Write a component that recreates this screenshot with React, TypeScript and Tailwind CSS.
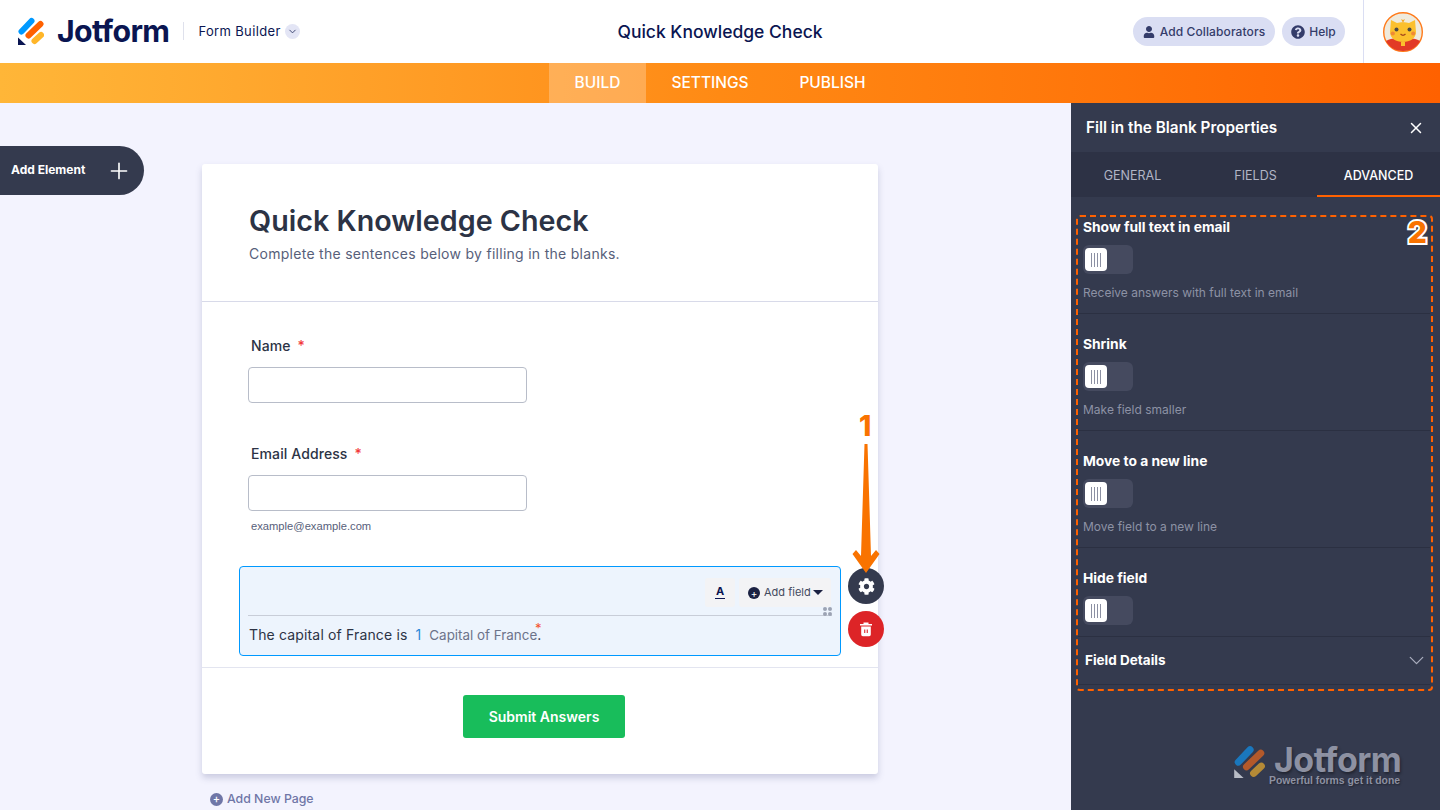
import React from "react";
import { ChevronDown, Plus, X } from "lucide-react";
import { FaCog, FaQuestionCircle, FaUser } from "react-icons/fa";

function LogoMark({ className = "", dim = false }: { className?: string; dim?: boolean }) {
  return (
    <svg viewBox="0 0 26 28" className={className}>
      <path d="M3.5 14.5 L13.5 4" stroke={dim ? "#1a77bd" : "#0099ff"} strokeWidth="6" strokeLinecap="round" />
      <path d="M10.5 18.5 L22.5 7" stroke={dim ? "#b3592a" : "#ff6100"} strokeWidth="6" strokeLinecap="round" />
      <path d="M16.5 24 L23 18" stroke={dim ? "#b58a36" : "#ffb629"} strokeWidth="6" strokeLinecap="round" />
      <path d="M0 20.5 V28 H8 Z" fill={dim ? "#b8bcc6" : "#0a1551"} />
    </svg>
  );
}

function Avatar() {
  return (
    <svg viewBox="0 0 40 40" className="h-10 w-10">
      <circle cx="20" cy="20" r="19.3" fill="#efeadc" stroke="#ff7a1a" strokeWidth="1.4" />
      <path d="M3 29 C8 26 14 26 20 26 C26 26 32 26 37 29 C34 35 28 39 20 39 C12 39 6 35 3 29 Z" fill="#e23a26" />
      <path d="M8 8 L14 11 C17 10 23 10 26 11 L32 8 L33 20 C33 26.5 27 30 20 30 C13 30 7 26.5 7 20 Z" fill="#fbc02d" />
      <path d="M18 7 L20 11 L22 7 L20 8 Z" fill="#f7a928" />
      <circle cx="13.5" cy="17.5" r="2" fill="#4d4a44" />
      <circle cx="26.5" cy="17.5" r="2" fill="#4d4a44" />
      <circle cx="9.8" cy="21.5" r="2.1" fill="#f08a34" />
      <circle cx="30.2" cy="21.5" r="2.1" fill="#f08a34" />
      <path d="M17.5 22 Q20 24.6 22.5 22" stroke="#a5481c" strokeWidth="1.2" fill="none" />
      <path d="M18 30 H22 V34 H18 Z" fill="#fbc02d" />
    </svg>
  );
}

function Toggle() {
  return (
    <div className="flex h-[29px] w-[50px] items-center rounded-[6px] bg-[#454a5f] pl-[2px]">
      <div className="flex h-[23px] w-[22px] items-center justify-center gap-[2px] rounded-[4px] bg-white">
        <span className="h-[14px] w-px bg-[#8c90a3]" />
        <span className="h-[14px] w-px bg-[#8c90a3]" />
        <span className="h-[14px] w-px bg-[#8c90a3]" />
        <span className="h-[14px] w-px bg-[#8c90a3]" />
      </div>
    </div>
  );
}

function PropertyRow({ title, hint, h }: { title: string; hint?: string; h: string }) {
  return (
    <div className={`${h} border-b border-[#2b3042] pl-[5px] pt-[1px]`}>
      <div className="text-[13.8px] font-bold leading-[16px] text-white">{title}</div>
      <div className="mt-[10px]">
        <Toggle />
      </div>
      {hint && <div className="mt-[11px] text-[12px] leading-[16px] text-[#8d92a5]">{hint}</div>}
    </div>
  );
}

function FieldLabel({ text }: { text: string }) {
  return (
    <div className="pl-[3px] text-[14px] font-medium leading-[18px] tracking-[0.1px] text-[#2c3345]">
      {text}
      <span className="ml-[7px] text-[#f23a3c]">*</span>
    </div>
  );
}

export default function App() {
  return (
    <div className="flex h-[810px] w-[1440px] flex-col overflow-hidden bg-[#f3f3fe] font-['Inter',sans-serif]">
      <header className="grid h-[63px] shrink-0 grid-cols-[1fr_auto_1fr] items-center bg-white">
        <div className="flex items-center pl-[18px]">
          <LogoMark className="h-[28px] w-[26px]" />
          <span className="ml-[13px] text-[30.3px] font-bold leading-none tracking-[-0.6px] text-[#0a1551]">Jotform</span>
          <span className="ml-[14px] h-[18px] w-px bg-[#dfe1ec]" />
          <span className="ml-[14px] text-[13px] leading-none tracking-[0.35px] text-[#0a1551]">Form Builder</span>
          <span className="ml-[4px] flex h-[15px] w-[15px] items-center justify-center rounded-full bg-[#e3e5f5]">
            <ChevronDown size={11} className="text-[#343c6a]" />
          </span>
        </div>
        <div className="text-[17.5px] font-medium leading-none text-[#0a1551]">Quick Knowledge Check</div>
        <div className="flex h-full items-center justify-end">
          <div className="flex h-[29px] w-[142px] items-center justify-center gap-[5px] rounded-full bg-[#dadef3] text-[12px] font-medium tracking-[0.1px] text-[#343c6a]">
            <FaUser size={12} />
            Add Collaborators
          </div>
          <div className="ml-[7px] flex h-[29px] w-[63px] items-center justify-center gap-[4px] rounded-full bg-[#dadef3] text-[12px] font-medium text-[#343c6a]">
            <FaQuestionCircle size={14} />
            Help
          </div>
          <div className="ml-[18px] flex h-full w-[77px] items-center justify-center border-l border-[#dadef3] pl-[1px]">
            <Avatar />
          </div>
        </div>
      </header>

      <nav className="flex h-[40px] shrink-0 justify-center bg-gradient-to-r from-[#ffb638] via-[#ff8a14] to-[#ff6100] text-[15.5px] font-medium text-white">
        <div className="flex w-[97px] items-center justify-center bg-white/25">BUILD</div>
        <div className="flex w-[128px] items-center justify-center">SETTINGS</div>
        <div className="flex w-[117px] items-center justify-center">PUBLISH</div>
      </nav>

      <div className="flex min-h-0 flex-1">
        <main className="relative w-[1071px] shrink-0">
          <div className="absolute left-0 top-[43px] flex h-[49px] w-[144px] items-center justify-between rounded-r-full bg-[#343a4e] pb-[2px] pl-[11px] pr-[12px] text-[12px] font-bold text-white">
            Add Element
            <Plus size={26} strokeWidth={1.5} className="mt-[2px]" />
          </div>

          <div className="ml-[202px] mt-[61px] w-[676px] rounded-[3px] bg-white shadow-[0_4px_6px_rgba(87,90,140,0.25)]">
            <section className="h-[138px] border-b border-[#d8dae9] pl-[47px] pt-[39px]">
              <h1 className="text-[28.7px] font-semibold leading-[36px] text-[#2c3345]">Quick Knowledge Check</h1>
              <p className="mt-[6px] text-[14px] leading-[18px] tracking-[0.28px] text-[#57607a]">
                Complete the sentences below by filling in the blanks.
              </p>
            </section>

            <section className="relative h-[366px] border-b border-[#e3e5f0] pt-[35px]">
              <div className="pl-[46px]">
                <FieldLabel text="Name" />
                <div className="mt-[12px] h-[36px] w-[279px] rounded-[4px] border border-[#b8bdc9] bg-white" />
              </div>
              <div className="mt-[42px] pl-[46px]">
                <FieldLabel text="Email Address" />
                <div className="mt-[12px] h-[36px] w-[279px] rounded-[4px] border border-[#b8bdc9] bg-white" />
                <div className="mt-[8px] pl-[3px] font-['Liberation_Sans',sans-serif] text-[11.2px] leading-[14px] text-[#57607a]">
                  example@example.com
                </div>
              </div>

              <div className="relative ml-[37px] mt-[33px] h-[90px] w-[602px] rounded-[4px] border border-[#0099ff] bg-[#edf4fd]">
                <div className="mx-[8px] flex h-[49px] items-start justify-end gap-[4px] border-b border-[#c8cdd8] pr-[1px] pt-[11px]">
                  <div className="flex h-[29px] w-[30px] flex-col items-center justify-center rounded-[3px] bg-[#f3f3f5] text-[#0a1551]">
                    <span className="text-[11px] font-bold leading-[11px]">A</span>
                    <span className="mt-[1px] h-[1.5px] w-[10px] bg-[#0a1551]" />
                  </div>
                  <div className="flex h-[29px] w-[92px] items-center rounded-[3px] bg-[#f3f3f5] pb-[1px] pl-[9px] text-[11px] text-[#434a60]">
                    <span className="mr-[4px] mt-[1px] flex h-[12px] w-[12px] items-center justify-center rounded-full bg-[#1b2142] text-[10px] leading-none text-white">+</span>
                    Add field
                    <span className="ml-[2px] h-0 w-0 border-x-[5px] border-t-[5px] border-x-transparent border-t-[#1b2142]" />
                  </div>
                </div>
                <div className="absolute right-[8px] top-[40px] grid grid-cols-2 gap-[1px]">
                  <span className="h-[4px] w-[4px] rounded-full bg-[#9ca3b4]" />
                  <span className="h-[4px] w-[4px] rounded-full bg-[#9ca3b4]" />
                  <span className="h-[4px] w-[4px] rounded-full bg-[#9ca3b4]" />
                  <span className="h-[4px] w-[4px] rounded-full bg-[#9ca3b4]" />
                </div>
                <div className="relative mt-[10px] pl-[9px] text-[14px] leading-[18px] tracking-[0.15px] text-[#2c3345]">
                  The capital of France is<span className="ml-[8px] text-[#2a8ad8]">1</span>
                  <span className="ml-[8px] text-[13.4px] tracking-normal text-[#6c738a]">Capital of France</span>.
                  <span className="absolute left-[295px] top-[-7px] text-[13px] text-[#f4522d]">*</span>
                </div>

                <div className="absolute left-[608px] top-[1px] flex h-[36px] w-[36px] items-center justify-center rounded-full bg-[#343a4e] text-white">
                  <FaCog size={17} />
                </div>
                <div className="absolute left-[608px] top-[44px] flex h-[36px] w-[36px] items-center justify-center rounded-full bg-[#dd2427]">
                  <svg viewBox="0 0 16 16" className="h-[16px] w-[16px]">
                    <path d="M2 3h12v1.6H2zM5.5 1.5h5V3h-5z" fill="#fff" />
                    <path fillRule="evenodd" d="M3.2 5.4h9.6v8.2a1.6 1.6 0 0 1-1.6 1.6H4.8a1.6 1.6 0 0 1-1.6-1.6zM6.2 8.5v3.4h1.1V8.5zM8.7 8.5v3.4h1.1V8.5z" fill="#fff" />
                  </svg>
                </div>
              </div>

              <svg viewBox="0 0 40 132" className="absolute left-[644px] top-[141px] h-[132px] w-[40px]">
                <path d="M18.5 1 H21.5 L25 113 L30 107 L33.5 111 L20 130 L6.5 111 L10 107 L15 113 Z" fill="#f97300" />
              </svg>
              <div className="absolute left-[657px] top-[107px] text-[28px] font-extrabold leading-[34px] text-[#f97300] [-webkit-text-stroke:4px_white] [paint-order:stroke_fill]">
                1
              </div>
            </section>

            <section className="flex h-[106px] justify-center pl-[8px] pt-[27px]">
              <div className="flex h-[43px] w-[162px] items-center justify-center rounded-[3px] bg-[#18bd5b] text-[14px] font-semibold text-white">
                Submit Answers
              </div>
            </section>
          </div>

          <div className="ml-[210px] mt-[17px] flex items-center gap-[4px] text-[12.3px] font-medium leading-[16px] text-[#6f76a7]">
            <span className="flex h-[13px] w-[13px] items-center justify-center rounded-full bg-[#6f76a7] text-[11px] leading-none text-white">+</span>
            Add New Page
          </div>
        </main>

        <aside className="relative flex min-w-0 flex-1 flex-col bg-[#343a4e]">
          <div className="flex h-[49px] shrink-0 items-center justify-between px-[15px] pt-[1px] text-[15.3px] font-semibold text-white">
            Fill in the Blank Properties
            <X size={18} strokeWidth={2} />
          </div>
          <div className="grid h-[45px] shrink-0 grid-cols-3 bg-[#2d3245] text-[12.5px]">
            <div className="flex items-center justify-center pt-[4px] text-[#b1b5c6]">GENERAL</div>
            <div className="flex items-center justify-center pt-[4px] text-[#b1b5c6]">FIELDS</div>
            <div className="flex items-center justify-center border-b-2 border-[#ff6100] pt-[6px] font-medium text-white">ADVANCED</div>
          </div>

          <div className="relative ml-[5px] mr-[7px] mt-[18px] h-[476px] rounded-[4px] border-2 border-dashed border-[#ff6100] pr-[1px] pt-[1px]">
            <PropertyRow h="h-[96px]" title="Show full text in email" hint="Receive answers with full text in email" />
            <div className="pt-[21px]">
              <PropertyRow h="h-[96px]" title="Shrink" hint="Make field smaller" />
            </div>
            <div className="pt-[21px]">
              <PropertyRow h="h-[96px]" title="Move to a new line" hint="Move field to a new line" />
            </div>
            <div className="pt-[21px]">
              <PropertyRow h="h-[68px]" title="Hide field" />
            </div>
            <div className="flex h-[48px] items-center justify-between border-b border-[#2b3042] pl-[7px] pr-[1px] text-[13.5px] font-bold text-white">
              Field Details
              <ChevronDown size={25} strokeWidth={1.2} className="text-[#a9adbd]" />
            </div>
            <div className="absolute right-[4px] top-[-3px] text-[30px] font-extrabold leading-[36px] text-[#f97300] [-webkit-text-stroke:4px_white] [paint-order:stroke_fill]">
              2
            </div>
          </div>

          <div className="absolute left-[163px] top-[641px] flex">
            <LogoMark dim className="mt-[1px] h-[33px] w-[31px]" />
            <div className="ml-[9px] flex flex-col">
              <span className="text-[34px] font-bold leading-[31px] tracking-[-0.5px] text-[#8d91a2] [text-shadow:1px_2px_3px_rgba(0,0,0,0.4)]">Jotform</span>
              <span className="-ml-[5px] font-['Liberation_Sans',sans-serif] text-[10.4px] font-bold leading-[11px] text-[#8d91a2] [text-shadow:1px_1px_2px_rgba(0,0,0,0.4)]">
                Powerful forms get it done
              </span>
            </div>
          </div>
        </aside>
      </div>
    </div>
  );
}
